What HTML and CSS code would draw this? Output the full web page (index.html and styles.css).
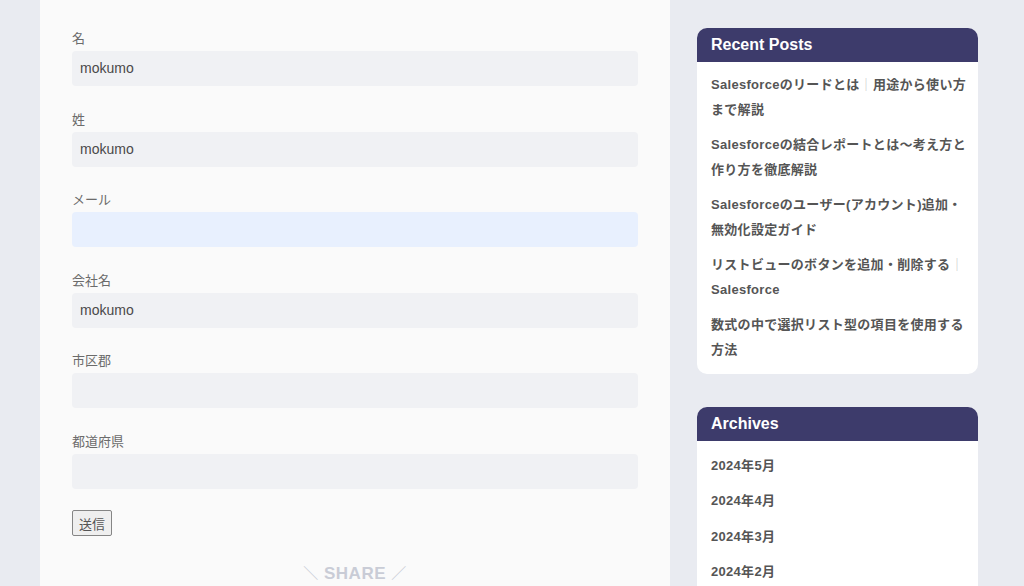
FILE: index.html
```html
<!DOCTYPE html>
<html lang="ja">
<head>
<meta charset="utf-8">
<title>Form</title>
<link rel="stylesheet" href="styles.css">
</head>
<body>
<div class="page">
  <main class="panel">
    <form class="form">
      <div class="field">
        <label class="label">名</label>
        <div class="input">mokumo</div>
      </div>
      <div class="field">
        <label class="label">姓</label>
        <div class="input">mokumo</div>
      </div>
      <div class="field">
        <label class="label">メール</label>
        <div class="input input-autofill"></div>
      </div>
      <div class="field">
        <label class="label">会社名</label>
        <div class="input">mokumo</div>
      </div>
      <div class="field">
        <label class="label">市区郡</label>
        <div class="input"></div>
      </div>
      <div class="field field-last">
        <label class="label">都道府県</label>
        <div class="input"></div>
      </div>
      <button type="button" class="submit">送信</button>
    </form>
    <div class="share"><span class="slash">＼</span> SHARE <span class="slash">／</span></div>
  </main>
  <aside class="sidebar">
    <section class="widget">
      <h2 class="widget-title">Recent Posts</h2>
      <ul class="widget-list posts">
        <li>Salesforceのリードとは<span class="bar">｜</span>用途から使い方まで解説</li>
        <li>Salesforceの結合レポートとは〜考え方と作り方を徹底解説</li>
        <li>Salesforceのユーザー(アカウント)追加・無効化設定ガイド</li>
        <li>リストビューのボタンを追加・削除する<span class="bar">｜</span>Salesforce</li>
        <li>数式の中で選択リスト型の項目を使用する方法</li>
      </ul>
    </section>
    <section class="widget">
      <h2 class="widget-title">Archives</h2>
      <ul class="widget-list archives">
        <li>2024年5月</li>
        <li>2024年4月</li>
        <li>2024年3月</li>
        <li>2024年2月</li>
      </ul>
    </section>
  </aside>
</div>
</body>
</html>
```

FILE: styles.css
```css
html, body {
  margin: 0;
  padding: 0;
  height: 586px;
  overflow: hidden;
  background: #e9ebf1;
  font-family: "Liberation Sans", "Noto Sans CJK JP", sans-serif;
}

.page {
  display: flex;
  align-items: flex-start;
  gap: 27px;
  padding-left: 40px;
}

.panel {
  width: 630px;
  height: 586px;
  box-sizing: border-box;
  background: #fafafa;
  padding: 29px 32px 0;
}

.field {
  margin-bottom: 23.5px;
}

.field-last {
  margin-bottom: 21.5px;
}

.label {
  display: block;
  font-size: 13px;
  line-height: 20px;
  color: #6b6b6b;
  margin-bottom: 2px;
}

.input {
  height: 35px;
  box-sizing: border-box;
  background: #f0f1f4;
  border-radius: 4px;
  padding: 0 8px;
  font-size: 14px;
  line-height: 35px;
  color: #4a4a4a;
}

.input-autofill {
  background: #e8f0fe;
}

.submit {
  display: block;
  height: 26px;
  width: 40px;
  padding: 0;
  font-family: "Noto Sans CJK JP", sans-serif;
  font-size: 13px;
  color: #555;
  background: #efefef;
  border: 1px solid #858585;
  border-radius: 2px;
}

.share {
  margin-top: 28px;
  text-align: center;
  font-size: 17px;
  line-height: 20px;
  font-weight: bold;
  color: #c9ccd6;
  letter-spacing: 0.5px;
}

.slash {
  font-weight: normal;
  font-size: 15px;
}

.sidebar {
  width: 281px;
  padding-top: 28px;
  display: flex;
  flex-direction: column;
  gap: 33px;
}

.widget {
  background: #fff;
  border-radius: 10px;
  overflow: hidden;
}

.widget-title {
  margin: 0;
  height: 34px;
  background: #3d3b6b;
  color: #fff;
  font-size: 16px;
  font-weight: bold;
  line-height: 34px;
  padding: 0 14px;
}

.widget-list {
  list-style: none;
  margin: 0;
  padding: 9.5px 12px 12.5px 14px;
  display: flex;
  flex-direction: column;
  gap: 10px;
  font-size: 13px;
  line-height: 25px;
  font-weight: bold;
  color: #555;
  letter-spacing: 0.3px;
}

.bar {
  color: #c8c8c8;
  font-weight: normal;
}

.archives {
  padding-top: 11.5px;
  padding-bottom: 20px;
  gap: 10.5px;
}
```
